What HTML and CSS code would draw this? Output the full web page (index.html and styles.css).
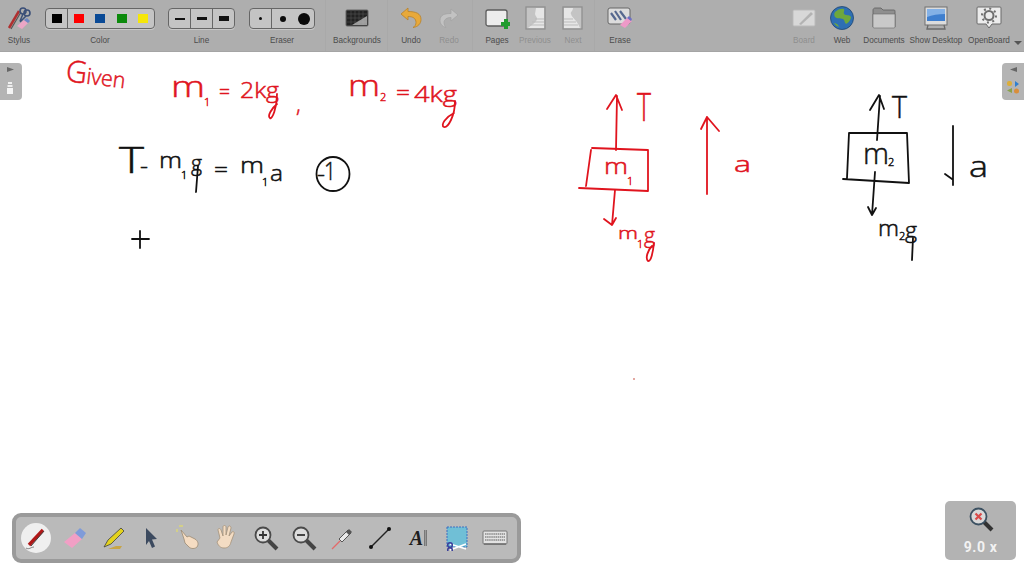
FILE: index.html
```html
<!DOCTYPE html>
<html lang="en">
<head>
<meta charset="utf-8">
<title>OpenBoard</title>
<link rel="stylesheet" href="styles.css">
</head>
<body>
<div class="app">
  <header class="toolbar">
    <section class="sec sec-a">
      <div class="tool w-stylus">
        <svg class="ico" width="26" height="26" viewBox="0 0 26 26"><path d="M3 23 13 6" stroke="#b03030" stroke-width="2.5"/><path d="M5 24 15 7" stroke="#555" stroke-width="1.2"/><circle cx="17" cy="6" r="3" fill="none" stroke="#3a4f78" stroke-width="1.6"/><circle cx="21" cy="8" r="3" fill="none" stroke="#3a4f78" stroke-width="1.6"/><path d="m17 9-3 7M20 11l-6 6" stroke="#3a4f78" stroke-width="1.5"/><path d="m11 21 7-6 4 3-6 6z" fill="#eba6c6"/><path d="m18 15 3-2 3 3-2 2z" fill="#6d86c4"/></svg>
        <span class="lbl">Stylus</span>
      </div>
      <div class="tool w-color">
        <div class="seg">
          <span class="cell c-first"><i class="sw k"></i></span>
          <span class="cell c-color"><i class="sw r"></i></span>
          <span class="cell c-color"><i class="sw b"></i></span>
          <span class="cell c-color"><i class="sw g"></i></span>
          <span class="cell c-color"><i class="sw y"></i></span>
        </div>
        <span class="lbl">Color</span>
      </div>
      <div class="tool w-line">
        <div class="seg">
          <span class="cell c-line div"><i class="ln l1"></i></span>
          <span class="cell c-line div"><i class="ln l2"></i></span>
          <span class="cell c-line"><i class="ln l3"></i></span>
        </div>
        <span class="lbl">Line</span>
      </div>
      <div class="tool w-eraser">
        <div class="seg">
          <span class="cell c-first"><i class="dot d1"></i></span>
          <span class="cell c-er"><i class="dot d2"></i></span>
          <span class="cell c-er"><i class="dot d3"></i></span>
        </div>
        <span class="lbl">Eraser</span>
      </div>
    </section>
    <section class="sec sec-b">
      <div class="tool w-bg">
        <svg class="ico" width="26" height="26" viewBox="0 0 26 26"><rect x="2" y="5" width="22" height="16" rx="1" fill="#222" stroke="#666"/><path d="M3 9h20M3 13h20M3 17h20M7 6v14M11 6v14M15 6v14M19 6v14" stroke="#555" stroke-width=".6"/><path d="M8 20 23 11v9z" fill="#bbb" opacity=".8"/></svg>
        <span class="lbl">Backgrounds</span>
      </div>
    </section>
    <section class="sec sec-c">
      <div class="tool">
        <svg class="ico" width="26" height="26" viewBox="0 0 26 26"><path d="M10 3 3 9l7 6v-3.500c5 0 8 2 8 6 0 2-1 4-3 5 5-.5 8-4 8-8 0-6-5-8-13-8z" fill="#e8a93a" stroke="#b7812a" stroke-width=".8"/></svg>
        <span class="lbl">Undo</span>
      </div>
      <div class="tool">
        <svg class="ico dim" width="26" height="26" viewBox="0 0 26 26"><path d="m15 4 7 6-7 6v-3.500c-4 0-7 2-7 5 0 2 1 4 2 5-4-1-6-4-6-7 0-6 5-7 11-7z" fill="#c6c6c6" stroke="#a2a2a2" stroke-width=".8"/></svg>
        <span class="lbl off">Redo</span>
      </div>
    </section>
    <section class="sec sec-d">
      <div class="tool">
        <svg class="ico" width="26" height="26" viewBox="0 0 26 26"><rect x="2" y="5" width="21" height="16" rx="2" fill="#ececec" stroke="#5c5c5c" stroke-width="1.300"/><path d="M20 14h4v3h3v4h-3v3h-4v-3h-3v-4h3z" fill="#1f9b2e"/></svg>
        <span class="lbl">Pages</span>
      </div>
      <div class="tool">
        <svg class="ico" width="26" height="26" viewBox="0 0 26 26"><rect x="4" y="2" width="19" height="22" fill="#c4c4c4" stroke="#8f8f8f" stroke-width="1.300"/><path d="M14 3h8v20H6c3-3 8-5 9-9 .5-2-2-3-2-5z" fill="#e6e6e6"/><path d="M8 20h14M10 17h12M13 14h9" stroke="#bbb"/></svg>
        <span class="lbl off">Previous</span>
      </div>
      <div class="tool">
        <svg class="ico" width="26" height="26" viewBox="0 0 26 26"><rect x="3" y="2" width="19" height="22" fill="#c4c4c4" stroke="#8f8f8f" stroke-width="1.300"/><path d="M4 3h9c0 3-3 4-2 6 1 4 6 6 9 14H4z" fill="#e6e6e6"/><path d="M4 20h14M4 17h12M4 14h9" stroke="#bbb"/></svg>
        <span class="lbl off">Next</span>
      </div>
    </section>
    <section class="sec sec-e">
      <div class="tool">
        <svg class="ico" width="26" height="26" viewBox="0 0 26 26"><rect x="1" y="3" width="22" height="16" rx="2" fill="#dcdcdc" stroke="#666"/><path d="m4 8 5 7M8 6l6 9M13 6l6 8" stroke="#56688f" stroke-width="2.200"/><path d="m13 20 7-7 5 3-7 7z" fill="#ee9ac8"/><path d="m20 13 2-2 3 3-1 2z" fill="#6d6fc4"/></svg>
        <span class="lbl">Erase</span>
      </div>
    </section>
    <section class="sec-f">
      <div class="tool">
        <svg class="ico dim" width="26" height="26" viewBox="0 0 26 26"><rect x="2" y="5" width="22" height="16" rx="1" fill="#e0e0e0" stroke="#bdbdbd"/><path d="m8 19 12-12 2 2-12 11z" fill="#b5b5b5"/></svg>
        <span class="lbl off">Board</span>
      </div>
      <div class="tool">
        <svg class="ico" width="26" height="26" viewBox="0 0 26 26"><circle cx="13" cy="13" r="11.500" fill="#2e6fb3" stroke="#1f456e" stroke-width=".8"/><path d="M6 7c3-3 7-4 9-3 1 2-1 3 0 5 2 2 5 0 7 3 0 3-3 6-5 7-2-2-1-4-3-5-3-1-6 0-8-2-1-2-1-3 0-5zM5 18c2 0 4 1 5 4-2-1-4-2-5-4z" fill="#6ea83c"/></svg>
        <span class="lbl">Web</span>
      </div>
      <div class="tool w-docs">
        <svg class="ico" width="26" height="26" viewBox="0 0 26 26"><path d="M2 5c0-1 1-2 2-2h6l2 2h11c1 0 1 1 1 2v15H2z" fill="#8f8f8f" stroke="#5e5e5e" stroke-width=".8"/><path d="M2 9h22v13c0 .5-.5 1-1 1H3c-.5 0-1-.5-1-1z" fill="#c9c9c9" stroke="#6a6a6a" stroke-width=".6"/></svg>
        <span class="lbl">Documents</span>
      </div>
      <div class="tool w-desk">
        <svg class="ico" width="26" height="26" viewBox="0 0 26 26"><rect x="2" y="2" width="22" height="18" fill="#dcdcdc" stroke="#707070"/><rect x="4" y="4" width="18" height="12" fill="#3f7fcf"/><path d="M4 4h18v5C15 9 9 10 4 12z" fill="#84b1e6"/><path d="m5 20-1 4h18l-1-4" fill="none" stroke="#6a6a6a" stroke-width="1.300"/></svg>
        <span class="lbl">Show Desktop</span>
      </div>
      <div class="tool w-ob">
        <svg class="ico" width="26" height="26" viewBox="0 0 26 26"><path d="M2 2h22a1 1 0 0 1 1 1v15a1 1 0 0 1-1 1h-8l-3 4-3-4H2a1 1 0 0 1-1-1V3a1 1 0 0 1 1-1z" fill="#ececec" stroke="#6a6a6a"/><circle cx="13" cy="10.500" r="4.500" fill="none" stroke="#6f6f6f" stroke-width="2"/><circle cx="13" cy="10.500" r="7" fill="none" stroke="#6f6f6f" stroke-width="2" stroke-dasharray="2 3.500"/></svg>
        <span class="lbl">OpenBoard</span>
      </div>
      <span class="more"></span>
    </section>
  </header>

  <main class="board">
    <svg class="sheet" width="1024" height="524" viewBox="0 52 1024 524">
      <g class="ink red">
        <text class="t-word" transform="rotate(7 65 80)" x="65" y="81" textLength="60" lengthAdjust="spacingAndGlyphs">G<tspan class="t-sm">iven</tspan></text>
        <text class="t-x" x="171" y="97" textLength="34" lengthAdjust="spacingAndGlyphs">m</text>
        <text class="t-sub" x="204" y="106">1</text>
        <text class="t-sm" x="219" y="99" textLength="11" lengthAdjust="spacingAndGlyphs">=</text>
        <text class="t-sm" x="240" y="98" textLength="39" lengthAdjust="spacingAndGlyphs">2kg</text>
        <text class="t-sm" x="296" y="112">,</text>
        <text class="t-x" x="348" y="96" textLength="32" lengthAdjust="spacingAndGlyphs">m</text>
        <text class="t-sub" x="380" y="101">2</text>
        <text class="t-sm" x="396" y="100" textLength="14" lengthAdjust="spacingAndGlyphs">=</text>
        <text class="t-sm" x="414" y="102" textLength="43" lengthAdjust="spacingAndGlyphs">4kg</text>
        <text class="t-tall" x="637" y="121" textLength="14" lengthAdjust="spacingAndGlyphs">T</text>
        <text class="t-sm" x="604" y="174" textLength="24" lengthAdjust="spacingAndGlyphs">m</text>
        <text class="t-sub" x="627" y="185">1</text>
        <text class="t-tiny" x="618" y="239" textLength="20" lengthAdjust="spacingAndGlyphs">m</text>
        <text class="t-sub" x="637" y="248">1</text>
        <text class="t-sm" x="644" y="243" textLength="11" lengthAdjust="spacingAndGlyphs">g</text>
        <text class="t-sm" x="734" y="172" textLength="17" lengthAdjust="spacingAndGlyphs">a</text>
        <g class="stroke">
          <path d="M616 150 617 96M607 109 616 95 622 110"/>
          <path d="M591 150 586 186M592 148 648 150 648 191 579 188"/>
          <path d="M615 190 612 225M604 219 612 225 616 218"/>
          <path d="M707 194 707 117M701 129 707 117 719 131"/>
          <path d="M277 94C277 108 272 120 270 118 267 116 272 108 277 104"/>
          <path d="M455 101C455 116 448 128 444 127 440 125 446 117 454 113"/>
          <path d="M654 243C653 252 651 262 648 261 645 258 648 250 652 246"/>
        </g>
      </g>
      <g class="ink black">
        <text class="t-huge" x="119" y="173" textLength="25" lengthAdjust="spacingAndGlyphs">T</text>
        <text class="t-sm" x="140" y="174" textLength="8" lengthAdjust="spacingAndGlyphs">-</text>
        <text class="t-sm" x="159" y="168" textLength="23" lengthAdjust="spacingAndGlyphs">m</text>
        <text class="t-sub" x="181" y="179">1</text>
        <text class="t-sm" x="191" y="171" textLength="11" lengthAdjust="spacingAndGlyphs">g</text>
        <text class="t-sm" x="214" y="177" textLength="14" lengthAdjust="spacingAndGlyphs">=</text>
        <text class="t-sm" x="240" y="173" textLength="24" lengthAdjust="spacingAndGlyphs">m</text>
        <text class="t-sub" x="262" y="186">1</text>
        <text class="t-sm" x="270" y="181" textLength="13" lengthAdjust="spacingAndGlyphs">a</text>
        <text class="t-sm" x="317" y="182" textLength="8" lengthAdjust="spacingAndGlyphs">-</text>
        <text class="t-mid" x="324" y="180" textLength="12" lengthAdjust="spacingAndGlyphs">1</text>
        <text class="t-t2" x="892" y="118" textLength="15" lengthAdjust="spacingAndGlyphs">T</text>
        <text class="t-x" x="863" y="164" textLength="26" lengthAdjust="spacingAndGlyphs">m</text>
        <text class="t-sub" x="888" y="166">2</text>
        <text class="t-sm" x="878" y="236" textLength="21" lengthAdjust="spacingAndGlyphs">m</text>
        <text class="t-sub" x="899" y="240">2</text>
        <text class="t-sm" x="905" y="238" textLength="12" lengthAdjust="spacingAndGlyphs">g</text>
        <text class="t-x" x="969" y="177" textLength="19" lengthAdjust="spacingAndGlyphs">a</text>
        <g class="stroke">
          <ellipse cx="333" cy="174" rx="16.500" ry="17"/>
          <path d="M132 239H149M140 231V248"/>
          <path d="M877 140 880 96M870 110 879 95 884 109"/>
          <path d="M849 133 907 133 909 183 843 179M849 133 847 178"/>
          <path d="M875 172 872 215M868 207 872 215 876 208"/>
          <path d="M953 126V185M945 174 952 179"/>
          <path d="M198 166 196 192"/>
          <path d="M913 238 912 260"/>
        </g>
      </g>
      <circle class="speck" cx="634" cy="379" r=".8"/>
    </svg>

    <div class="tab tab-l">
      <svg width="22" height="37" viewBox="0 0 22 37"><path d="M7 9V4l7 2.500z" fill="#666"/><rect x="8" y="19" width="4" height="2" fill="#f0f0f0"/><rect x="7.500" y="22" width="5" height="2" fill="#eee"/><rect x="7" y="25" width="6" height="6" fill="#f5f5f5"/></svg>
    </div>
    <div class="tab tab-r">
      <svg width="22" height="37" viewBox="0 0 22 37"><path d="M15 9V4L8 6.500z" fill="#666"/><rect x="5" y="18" width="5" height="5" rx="2" fill="#dcae3a"/><path d="M13 18v6l4-3z" fill="#2e7fd0"/><path d="M10 25v5l-5-2.500z" fill="#8aa14a"/><circle cx="14.500" cy="28" r="2.500" fill="#d98e3a"/></svg>
    </div>

    <nav class="dock">
      <span class="dk"><span class="pen-bg"><svg width="30" height="30" viewBox="0 0 30 30"><path d="m8 22 14-15" stroke="#b01818" stroke-width="3.500"/><path d="m10 23 13-15" stroke="#444" stroke-width="1"/><path d="M5 25c3 2 5-1 8-1" fill="none" stroke="#888"/></svg></span></span>
      <span class="dk"><svg width="26" height="26" viewBox="0 0 26 26"><path d="m2 17 11-9 7 6-10 9z" fill="#f19fc5"/><path d="m13 8 5-5 6 5-4 6z" fill="#7f9bd9"/></svg></span>
      <span class="dk"><svg width="26" height="26" viewBox="0 0 26 26"><path d="M16 21h6l-2 3H8z" fill="#c8a544"/><path d="m4 22 4-7L21 3l3 3-13 13z" fill="#e3d21d" stroke="#3f3f3f" stroke-width=".8"/></svg></span>
      <span class="dk"><svg width="26" height="26" viewBox="0 0 26 26"><path d="m8 3 11 11-5 .5 3 7-3 1.500-3-7-3 4z" fill="#3c4a5f"/></svg></span>
      <span class="dk"><svg width="28" height="28" viewBox="0 0 28 28"><path d="M4 2h4M2 5v3" stroke="#dbd67a" stroke-width="1.500"/><path d="m6 6 6 7 2-1 6 3c3 2 4 5 2 8-2 2-6 2-8 0l-4-4-1-4z" fill="#f5dcc2" stroke="#9b8a73" stroke-width=".8"/></svg></span>
      <span class="dk"><svg width="26" height="28" viewBox="0 0 26 28"><path d="M6 14 4 6c0-2 2-2 3 0l2 6V3c0-2 3-2 3 0v8l2-8c1-2 3-1 3 1l-2 8 3-4c1-1 3 0 2 2l-3 8c-1 4-3 6-7 6s-6-3-7-6z" fill="#f3dcc3" stroke="#a4927a" stroke-width=".8"/></svg></span>
      <span class="dk"><svg width="28" height="28" viewBox="0 0 28 28"><path d="m16 16 9 9" stroke="#444" stroke-width="4"/><circle cx="11" cy="11" r="7.500" fill="#ddd" stroke="#4a4a4a" stroke-width="1.800"/><path d="M7 11h8M11 7v8" stroke="#333" stroke-width="1.800"/></svg></span>
      <span class="dk"><svg width="28" height="28" viewBox="0 0 28 28"><path d="m16 16 9 9" stroke="#444" stroke-width="4"/><circle cx="11" cy="11" r="7.500" fill="#ddd" stroke="#4a4a4a" stroke-width="1.800"/><path d="M7 11h8" stroke="#333" stroke-width="1.800"/></svg></span>
      <span class="dk"><svg width="26" height="26" viewBox="0 0 26 26"><path d="m3 24 8-8" stroke="#e36a6a" stroke-width="1.200"/><path d="m10 14 9-9 3 3-9 9z" fill="#e9e9e9" stroke="#555"/><path d="m17 7 3-3 3 3-3 3z" fill="#555"/></svg></span>
      <span class="dk"><svg width="26" height="26" viewBox="0 0 26 26"><path d="M4 22 22 4" stroke="#222" stroke-width="1.500"/><circle cx="4" cy="22" r="2" fill="#111"/><circle cx="22" cy="4" r="2" fill="#111"/></svg></span>
      <span class="dk dk-a">A<i class="caret"></i></span>
      <span class="dk"><svg width="26" height="26" viewBox="0 0 26 26"><rect x="3" y="2" width="20" height="20" fill="#70bfd6" stroke="#3c6fc0" stroke-dasharray="2 1"/><path d="m6 19 16 5M6 25l16-6" stroke="#fff" stroke-width="1.500"/><circle cx="6" cy="20" r="2.300" fill="none" stroke="#3a3f9a" stroke-width="1.500"/><circle cx="6" cy="25" r="2.300" fill="none" stroke="#3a3f9a" stroke-width="1.500"/></svg></span>
      <span class="dk"><svg width="26" height="18" viewBox="0 0 26 18"><rect x="1" y="2" width="24" height="13" rx="1" fill="#e3e3e3" stroke="#777"/><path d="M3 5h20M3 8h20M3 11h20" stroke="#888" stroke-width="1.400" stroke-dasharray="1.500 .6"/><path d="M2 15h22" stroke="#555"/></svg></span>
    </nav>

    <aside class="zoombadge">
      <svg width="28" height="28" viewBox="0 0 28 28"><path d="m17 17 8 8" stroke="#333" stroke-width="4"/><circle cx="11.500" cy="11.500" r="8" fill="#d9d9d9" stroke="#3c5162" stroke-width="1.800"/><path d="m8.500 8.500 6 6m0-6-6 6" stroke="#d94b4b" stroke-width="2.200"/></svg>
      <span class="zoomval">9.0 x</span>
    </aside>
  </main>
</div>
</body>
</html>
```
FILE: styles.css
```css
* { box-sizing: border-box; }
html, body { margin: 0; padding: 0; background: #fff; }
body { font-family: "Liberation Sans", Arial, sans-serif; overflow: hidden; }
.app { width: 1024px; height: 576px; display: flex; flex-direction: column; }

.toolbar { height: 52px; flex: none; display: flex; background: #aeaeae; border-bottom: 1px solid #a5a5a5; }
.sec { display: flex; border-right: 1px solid #a9a9a9; }
.sec-a { width: 326px; }
.sec-b { width: 62px; padding-left: 7px; }
.sec-c { width: 85px; padding-left: 4px; }
.sec-d { width: 122px; padding-left: 5px; }
.sec-e { width: 55px; padding-left: 6px; border-right: 0; }
.sec-f { flex: 1; display: flex; padding-left: 135px; }

.tool { width: 38px; flex: none; height: 51px; display: flex; flex-direction: column; align-items: center; position: relative; }
.ico { position: absolute; top: 5px; left: 50%; margin-left: -13px; display: block; }
.dim { opacity: .85; }
.lbl { position: absolute; top: 35px; left: -10px; right: -10px; text-align: center; font-size: 8.200px; line-height: 11px; color: #4c4c4c; white-space: nowrap; }
.off { color: #8e8e8e; }

.w-stylus { margin-right: 7px; }
.w-color { width: 110px; margin-right: 13px; }
.w-line { width: 67px; margin-right: 14px; }
.w-eraser { width: 66px; }
.w-bg { width: 48px; }
.w-docs { width: 46px; }
.w-desk { width: 58px; }
.w-ob { width: 48px; }

.seg { margin-top: 8px; width: 100%; height: 21px; display: flex; border: 1px solid #666; border-radius: 4px; background: #c4c4c4; box-shadow: 0 1px 0 #c8c8c8; }
.cell { height: 100%; display: flex; align-items: center; justify-content: center; }
.c-first { width: 22px; border-right: 1px solid #666; }
.c-color { width: 21.500px; }
.c-line { flex: 1; }
.div { border-right: 1px solid #666; }
.c-er { flex: 1; }
.sw { width: 10px; height: 9px; display: block; }
.k { background: #000; }
.r { background: #f00; }
.b { background: #0a4a96; }
.g { background: #0c8a0c; }
.y { background: #f5e60a; }
.ln { width: 10px; background: #111; display: block; }
.l1 { height: 2px; }
.l2 { height: 3px; }
.l3 { height: 5px; }
.dot { border-radius: 50%; background: #0a0a0a; display: block; }
.d1 { width: 3px; height: 3px; }
.d2 { width: 6px; height: 6px; }
.d3 { width: 12px; height: 12px; }
.more { width: 0; height: 0; margin: 41px 0 0 1px; border: 4px solid transparent; border-top: 4px solid #555; border-bottom: 0; }

.board { flex: 1; position: relative; background: #fff; }
.sheet { position: absolute; left: 0; top: 0; display: block; overflow: visible; }
.ink { font-family: "Open Sans", "Liberation Sans", sans-serif; font-weight: 300; }
.red { fill: #e0141e; stroke: #e0141e; }
.black { fill: #111; stroke: #111; }
.ink text, .ink tspan { stroke-width: .5px; }
.t-word { font-size: 30px; }
.t-x { font-size: 30px; }
.t-sm { font-size: 22px; }
.t-tiny { font-size: 17px; }
.t-sub { font-size: 11px; }
.t-mid { font-size: 26px; }
.t-tall { font-size: 38px; }
.t-t2 { font-size: 32px; }
.t-huge { font-size: 36px; }
.stroke { fill: none; stroke-width: 1.800px; stroke-linecap: round; stroke-linejoin: round; }
.speck { fill: #c0392b; stroke: none; }

.tab { position: absolute; top: 11px; width: 22px; height: 37px; background: #b4b4b4; }
.tab svg { display: block; }
.tab-l { left: 0; border-radius: 0 4px 4px 0; }
.tab-r { right: 0; border-radius: 4px 0 0 4px; }

.dock { position: absolute; left: 12px; top: 461px; width: 509px; height: 50px; padding-left: 1.400px; display: flex; align-items: center; background: #bababa; border: 4px solid #9a9a9a; border-radius: 9px; }
.dk { width: 38.200px; height: 100%; flex: none; display: flex; align-items: center; justify-content: center; }
.pen-bg { width: 30px; height: 30px; border-radius: 50%; background: #efefef; display: block; }
.pen-bg svg { display: block; }
.dk-a { font-family: "Liberation Serif", serif; font-weight: 700; font-style: italic; font-size: 20px; color: #1d1d1d; }
.caret { display: block; width: 3px; height: 16px; margin-left: 1px; border: 1px solid #444; border-width: 0 1px; transform: scaleX(.7); }

.zoombadge { position: absolute; left: 945px; top: 449px; width: 71px; height: 59px; padding-top: 4px; display: flex; flex-direction: column; align-items: center; background: #b3b3b3; border-radius: 5px; }
.zoombadge svg { display: block; }
.zoomval { margin-top: 6px; font-family: "Roboto", sans-serif; font-weight: 700; font-size: 14px; line-height: 16px; letter-spacing: .6px; color: #f2f2f2; }
```
